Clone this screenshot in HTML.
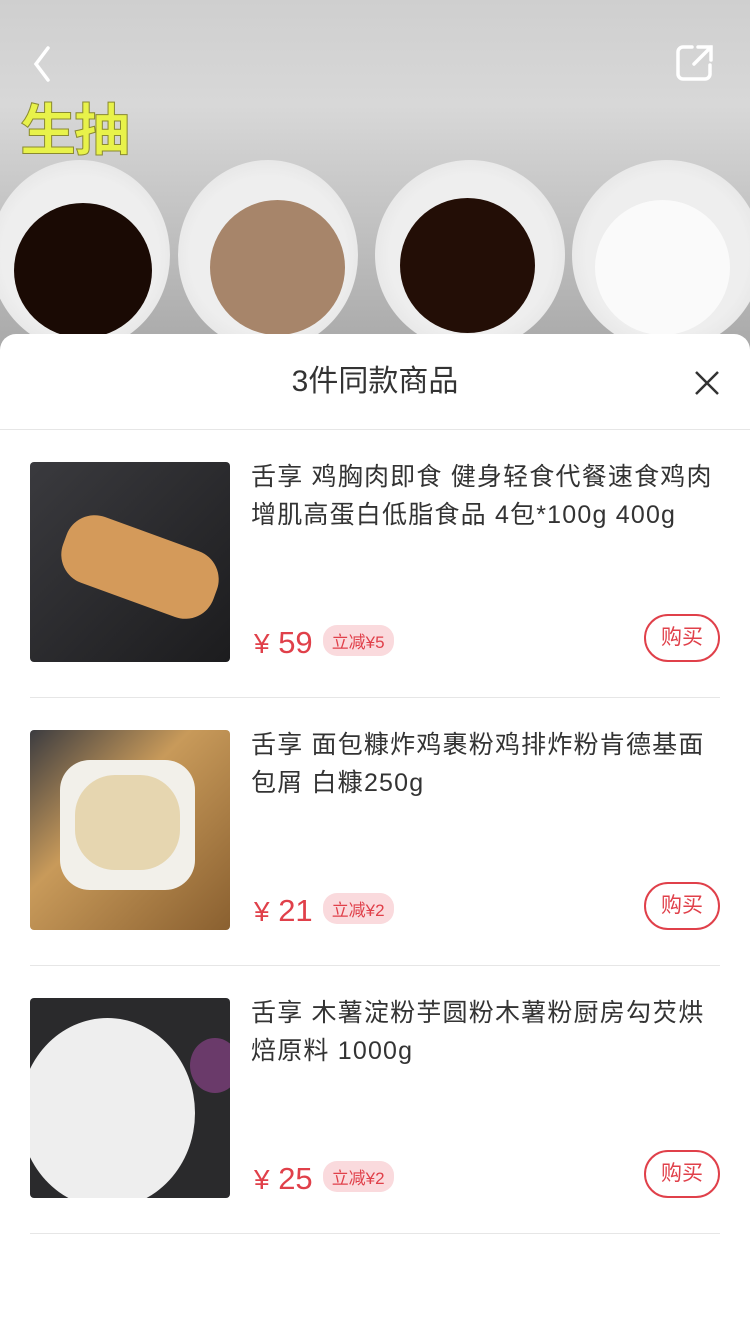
<!DOCTYPE html>
<html><head><meta charset="utf-8"><style>
*{margin:0;padding:0;box-sizing:border-box}
body{width:750px;height:1334px;position:relative;overflow:hidden;background:#fff;font-family:"Liberation Sans","Noto Sans CJK SC",sans-serif}
.top{position:absolute;left:0;top:0;width:750px;height:350px;background:linear-gradient(180deg,#cfcfcf 0%,#d8d8d8 30%,#c4c4c4 60%,#a9a9a9 100%);overflow:hidden}
.bowl{position:absolute;border-radius:50%;background:radial-gradient(circle,#eee 60%,#d9d9d9 100%)}
.liq{position:absolute;border-radius:50%}
.sheet{position:absolute;left:0;top:334px;width:750px;height:1000px;background:#fff;border-radius:16px 16px 0 0}
.hd{height:96px;border-bottom:1px solid #e6e6e6;text-align:center;line-height:96px;font-size:30px;color:#333}
.item{position:absolute;left:30px;width:690px;height:236px;border-bottom:1px solid #e6e6e6}
.pic{position:absolute;left:0;top:0;width:200px;height:200px;border-radius:4px;overflow:hidden}
.t{position:absolute;left:221px;top:-4px;width:480px;font-size:25px;line-height:38px;color:#333;letter-spacing:1.2px;white-space:nowrap}
.p{position:absolute;left:224px;top:163px;color:#e0404a;font-size:31px}
.p small{font-size:28px}
.tag{display:inline-block;vertical-align:5px;margin-left:10px;background:#fadadd;color:#e0404a;font-size:17px;padding:3px 9px;border-radius:14px}
.buy{position:absolute;right:0;top:152px;width:76px;height:48px;border:2px solid #e0404a;border-radius:24px;color:#e0404a;font-size:21px;text-align:center;line-height:44px}
</style></head><body>
<div class="top">
<div class="bowl" style="left:-10px;top:160px;width:180px;height:190px"></div>
<div class="liq" style="left:14px;top:203px;width:138px;height:135px;background:#1a0a04"></div>
<div class="bowl" style="left:178px;top:160px;width:180px;height:190px"></div>
<div class="liq" style="left:210px;top:200px;width:135px;height:135px;background:#a7856a"></div>
<div class="bowl" style="left:375px;top:160px;width:190px;height:190px"></div>
<div class="liq" style="left:400px;top:198px;width:135px;height:135px;background:#230e06"></div>
<div class="bowl" style="left:572px;top:160px;width:190px;height:190px"></div>
<div class="liq" style="left:595px;top:200px;width:135px;height:135px;background:#fafafa"></div>
<div style="position:absolute;left:20px;top:86px;font-size:56px;font-weight:bold;color:#e8f24a;-webkit-text-stroke:1px #8a8a30;letter-spacing:-2px">生抽</div>
<svg style="position:absolute;left:28px;top:44px" width="30" height="40"><path d="M20 4L8 20L20 36" fill="none" stroke="#fff" stroke-width="3.5" stroke-linecap="round"/></svg>
<svg style="position:absolute;left:674px;top:42px" width="42" height="42"><path d="M18 5H9a5 5 0 0 0-5 5v22a5 5 0 0 0 5 5h22a5 5 0 0 0 5-5v-9M24 5h13v13M37 5L20 22" fill="none" stroke="#fff" stroke-width="3.5" stroke-linecap="round"/></svg>
</div>
<div class="sheet">
<div class="hd">3件同款商品</div>
<svg style="position:absolute;left:694px;top:36px" width="26" height="26"><path d="M2 2L24 24M24 2L2 24" stroke="#333" stroke-width="2.5"/></svg>
</div>
<div class="item" style="top:462px">
<div class="pic" style="background:linear-gradient(135deg,#3a3a3e,#1c1c1e)"><div style="position:absolute;left:30px;top:70px;width:160px;height:70px;background:#d49a5a;border-radius:30px;transform:rotate(20deg)"></div></div>
<div class="t">舌享 鸡胸肉即食 健身轻食代餐速食鸡肉<br>增肌高蛋白低脂食品 4包*100g 400g</div>
<div class="p"><small>¥</small> 59<span class="tag">立减¥5</span></div>
<div class="buy">购买</div></div>
<div class="item" style="top:730px">
<div class="pic" style="background:linear-gradient(135deg,#3c3c40,#c89a5a 40%,#8a6030)"><div style="position:absolute;left:30px;top:30px;width:135px;height:130px;background:#f2f0ea;border-radius:30px"></div><div style="position:absolute;left:45px;top:45px;width:105px;height:95px;background:#e6d6b0;border-radius:40px"></div></div>
<div class="t">舌享 面包糠炸鸡裹粉鸡排炸粉肯德基面<br>包屑 白糠250g</div>
<div class="p"><small>¥</small> 21<span class="tag">立减¥2</span></div>
<div class="buy">购买</div></div>
<div class="item" style="top:998px">
<div class="pic" style="background:#2a2a2c"><div style="position:absolute;left:-10px;top:20px;width:175px;height:190px;background:#eeeeee;border-radius:50%"></div><div style="position:absolute;left:160px;top:40px;width:50px;height:55px;background:#6a3a6a;border-radius:50%"></div></div>
<div class="t">舌享 木薯淀粉芋圆粉木薯粉厨房勾芡烘<br>焙原料 1000g</div>
<div class="p"><small>¥</small> 25<span class="tag">立减¥2</span></div>
<div class="buy">购买</div></div>
</body></html>
